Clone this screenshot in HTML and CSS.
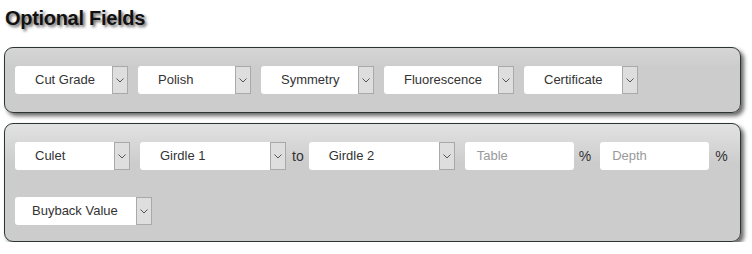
FILE: index.html
```html
<!DOCTYPE html>
<html>
<head>
<meta charset="utf-8">
<link rel="stylesheet" href="styles.css">
</head>
<body>
<h1 class="title">Optional Fields</h1>
<div class="panel panel-a">
  <div class="row">
    <div class="sel w97"><span class="face">Cut Grade</span><span class="arrow"><svg width="8" height="5" viewBox="0 0 8 5"><polyline points="0.5,0.5 4,4 7.5,0.5" fill="none" stroke="#555" stroke-width="1"/></svg></span></div>
    <div class="sel w97"><span class="face">Polish</span><span class="arrow"><svg width="8" height="5" viewBox="0 0 8 5"><polyline points="0.5,0.5 4,4 7.5,0.5" fill="none" stroke="#555" stroke-width="1"/></svg></span></div>
    <div class="sel w97"><span class="face">Symmetry</span><span class="arrow"><svg width="8" height="5" viewBox="0 0 8 5"><polyline points="0.5,0.5 4,4 7.5,0.5" fill="none" stroke="#555" stroke-width="1"/></svg></span></div>
    <div class="sel w114"><span class="face">Fluorescence</span><span class="arrow"><svg width="8" height="5" viewBox="0 0 8 5"><polyline points="0.5,0.5 4,4 7.5,0.5" fill="none" stroke="#555" stroke-width="1"/></svg></span></div>
    <div class="sel w98"><span class="face">Certificate</span><span class="arrow"><svg width="8" height="5" viewBox="0 0 8 5"><polyline points="0.5,0.5 4,4 7.5,0.5" fill="none" stroke="#555" stroke-width="1"/></svg></span></div>
  </div>
</div>
<div class="panel panel-b">
  <div class="row">
    <div class="sel w99"><span class="face">Culet</span><span class="arrow"><svg width="8" height="5" viewBox="0 0 8 5"><polyline points="0.5,0.5 4,4 7.5,0.5" fill="none" stroke="#555" stroke-width="1"/></svg></span></div>
    <div class="sel w130 tight"><span class="face">Girdle 1</span><span class="arrow"><svg width="8" height="5" viewBox="0 0 8 5"><polyline points="0.5,0.5 4,4 7.5,0.5" fill="none" stroke="#555" stroke-width="1"/></svg></span></div>
    <span class="label to">to</span>
    <div class="sel w130"><span class="face">Girdle 2</span><span class="arrow"><svg width="8" height="5" viewBox="0 0 8 5"><polyline points="0.5,0.5 4,4 7.5,0.5" fill="none" stroke="#555" stroke-width="1"/></svg></span></div>
    <div class="field"><span class="ph">Table</span></div>
    <span class="label pct">%</span>
    <div class="field"><span class="ph">Depth</span></div>
    <span class="label pct2">%</span>
  </div>
  <div class="row row2">
    <div class="sel w121 bb"><span class="face">Buyback Value</span><span class="arrow"><svg width="8" height="5" viewBox="0 0 8 5"><polyline points="0.5,0.5 4,4 7.5,0.5" fill="none" stroke="#555" stroke-width="1"/></svg></span></div>
  </div>
</div>
</body>
</html>
```
FILE: styles.css
```css
html, body {
  margin: 0;
  padding: 0;
  background: #ffffff;
}
body {
  padding: 0 4px;
  font-family: "Liberation Sans", Arial, sans-serif;
  color: #333333;
}
.title {
  margin: 6px 0 0 1px;
  height: 24px;
  line-height: 24px;
  font-size: 20px;
  font-weight: bold;
  letter-spacing: -0.3px;
  color: #111111;
  text-shadow: 2px 2px 3px rgba(0, 0, 0, 0.6);
}
.panel {
  box-sizing: border-box;
  width: 737px;
  border: 1px solid #2c3535;
  border-radius: 9px;
  background: linear-gradient(#e2e2e2 0px, #cccccc 40px, #cccccc 100%);
  box-shadow: 3px 3px 4px rgba(0, 0, 0, 0.6);
  padding: 18px 10px 18px 10px;
}
.panel-a {
  margin-top: 17px;
  background: linear-gradient(#d6d6d6 0px, #cccccc 20px, #cccccc 100%);
}
.panel-b {
  margin-top: 10px;
  padding-bottom: 16px;
}
.row {
  display: flex;
  align-items: center;
  gap: 10px;
}
.row > * {
  flex: none;
}
.row2 {
  margin-top: 27px;
}
.sel {
  display: flex;
  height: 28px;
}
.sel > * {
  flex: none;
}
.face {
  box-sizing: border-box;
  display: block;
  height: 28px;
  line-height: 28px;
  padding-left: 20px;
  background: #ffffff;
  border-radius: 3px 0 0 3px;
  font-size: 13px;
  color: #333333;
  white-space: nowrap;
  overflow: hidden;
}
.w97 .face { width: 97px; }
.w98 .face { width: 98px; }
.w99 .face { width: 99px; }
.w114 .face { width: 114px; }
.w130 .face { width: 130px; }
.w121 .face { width: 121px; }
.bb .face { padding-left: 17px; }
.arrow {
  box-sizing: border-box;
  display: flex;
  align-items: center;
  justify-content: center;
  width: 16px;
  height: 28px;
  background: #dedede;
  border: 1px solid #a9a9a9;
}
.arrow svg {
  display: block;
  margin-top: 1px;
}
.tight {
  margin-right: -4px;
}
.label {
  font-size: 14px;
  color: #333333;
  line-height: 28px;
}
.to {
  margin-right: -5px;
}
.field {
  box-sizing: border-box;
  width: 109px;
  height: 28px;
  line-height: 28px;
  background: #ffffff;
  border-radius: 3px;
  padding-left: 12px;
  font-size: 13px;
}
.ph {
  color: #9a9a9a;
}
.pct {
  margin-left: -5px;
  margin-right: -1px;
}
.pct2 {
  margin-left: -4px;
}
```
